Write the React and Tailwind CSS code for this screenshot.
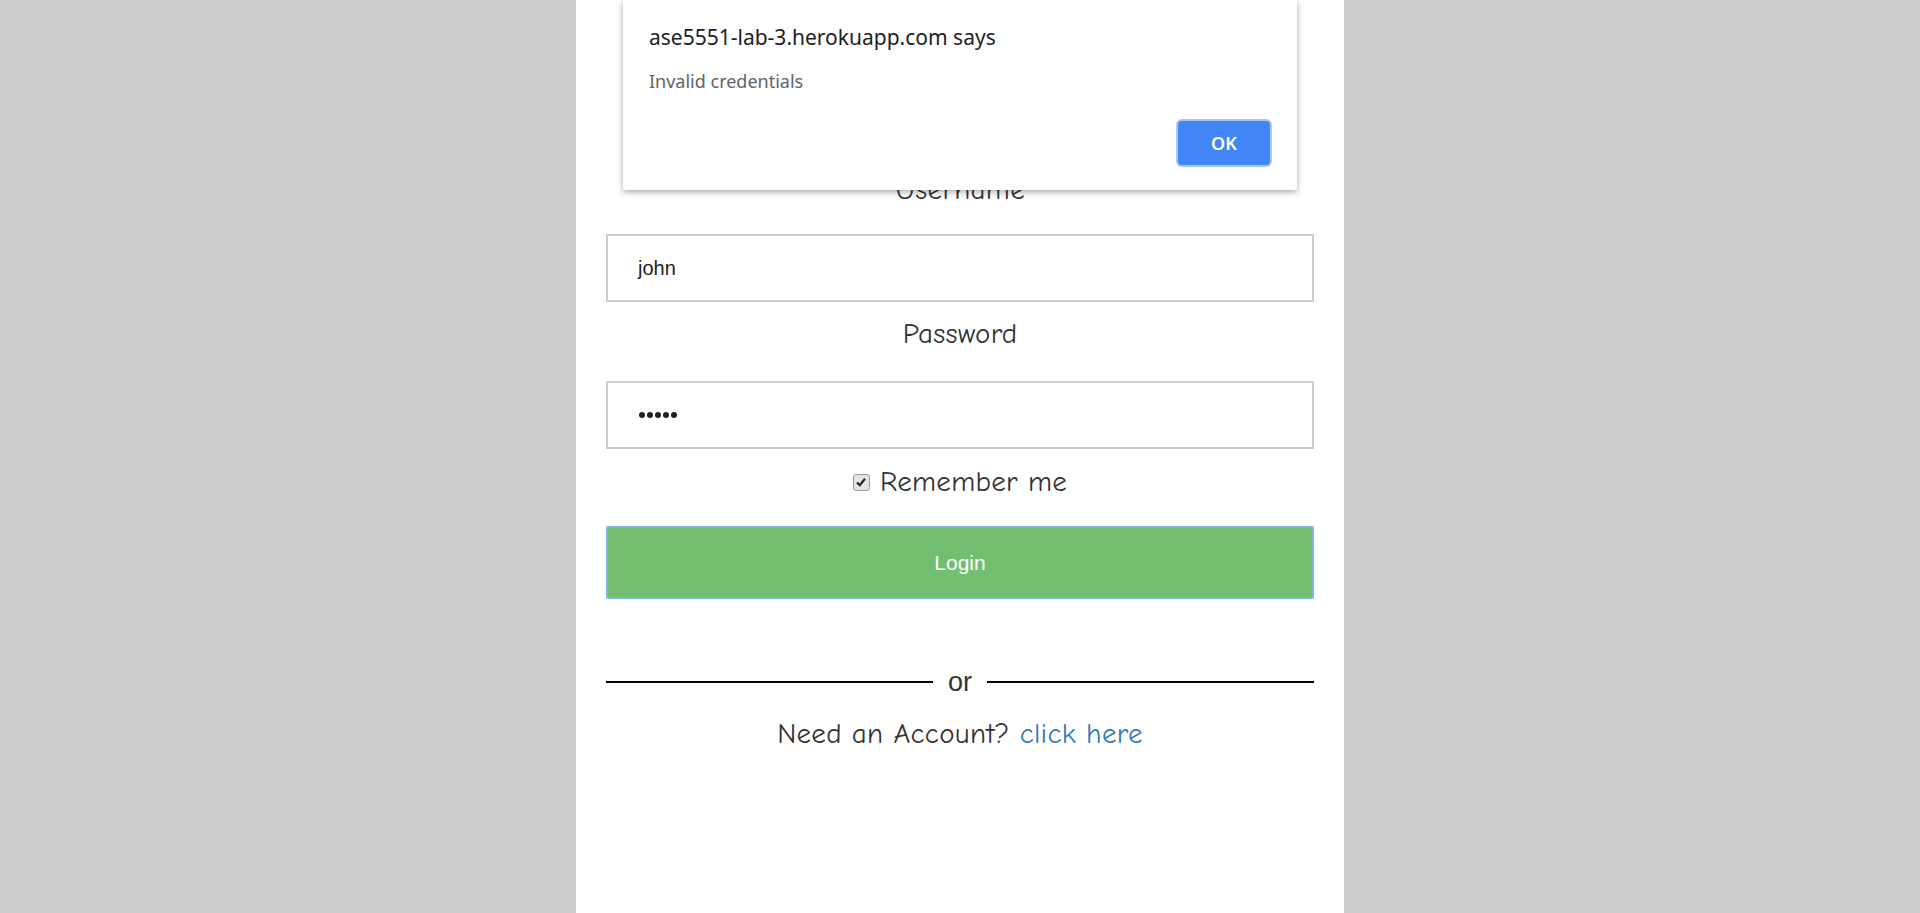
import React from "react";

const comic = { fontFamily: '"Comic Sans MS", "Comic Neue", Lato, sans-serif' };

function CheckBox() {
    return (
        <span className="inline-flex items-center justify-center w-[17px] h-[17px] rounded-[3px] border border-[#9a9a9a] bg-[#e4e4e4]">
            <svg width="12" height="12" viewBox="0 0 12 12">
                <path d="M2 6.5 L4.8 9.2 L10 2.8" fill="none" stroke="#222" strokeWidth="2.2" />
            </svg>
        </span>
    );
}

export default function App() {
    return (
        <div className="min-h-screen bg-[#cccccc] relative">
            <div className="w-[768px] mx-auto min-h-screen bg-white px-[30px] pt-[173px] text-[#333]">
                <div
                    className="text-center text-[29px] leading-[34px] tracking-[0.3px]"
                    style={comic}
                >
                    Username
                </div>
                <div className="mt-[27px] h-[68px] border-2 border-[#cccccc] flex items-center pl-[30px] text-[20px] text-[#222] font-['Liberation_Sans',Arial,sans-serif]">
                    john
                </div>
                <div
                    className="mt-[15px] text-center text-[29px] leading-[34px] tracking-[0.3px]"
                    style={comic}
                >
                    Password
                </div>
                <div className="mt-[30px] h-[68px] border-2 border-[#cccccc] flex items-center pl-[31px] gap-[2px]">
                    {[0, 1, 2, 3, 4].map((i) => (
                        <span
                            key={i}
                            className="w-[6px] h-[6px] rounded-full bg-[#222]"
                        />
                    ))}
                </div>
                <div
                    className="mt-[16px] h-[34px] flex items-center justify-center gap-[10px] text-[29px] tracking-[0.3px]"
                    style={comic}
                >
                    <CheckBox />
                    <span>Remember me</span>
                </div>
                <button className="mt-[27px] w-full h-[73px] bg-[#72bf72] border-2 border-[#80b0f0] rounded-[2px] text-white text-[21px] font-['Liberation_Sans',Arial,sans-serif]">
                    Login
                </button>
                <div className="mt-[66px] h-[34px] flex items-center gap-[15px]">
                    <div className="flex-1 h-[2px] bg-black" />
                    <span className="text-[27px] leading-[34px] text-[#333] font-['Liberation_Sans',Arial,sans-serif]">
                        or
                    </span>
                    <div className="flex-1 h-[2px] bg-black" />
                </div>
                <div
                    className="mt-[18px] text-center text-[29px] leading-[34px] tracking-[0.3px]"
                    style={comic}
                >
                    Need an Account?{" "}
                    <a href="#" className="text-[#337ab7]">
                        click here
                    </a>
                </div>
            </div>

            <div className="absolute top-0 left-[623px] w-[674px] h-[190px] bg-white shadow-[0_2px_6px_rgba(0,0,0,0.35)] rounded-b-[2px] px-[26px] pt-[20px] font-['Noto_Sans','Open_Sans',sans-serif] flex flex-col">
                <div className="text-[21px] leading-[34px] text-[#202124]">
                    ase5551-lab-3.herokuapp.com says
                </div>
                <div className="mt-[14px] text-[18px] leading-[26px] text-[#5f6368]">
                    Invalid credentials
                </div>
                <div className="flex justify-end mt-auto mb-[23px] -mr-px">
                    <button className="w-[96px] h-[48px] rounded-[6px] bg-[#4285f4] border-2 border-[#a9c6fb] text-white text-[18px] font-semibold">
                        OK
                    </button>
                </div>
            </div>
        </div>
    );
}
